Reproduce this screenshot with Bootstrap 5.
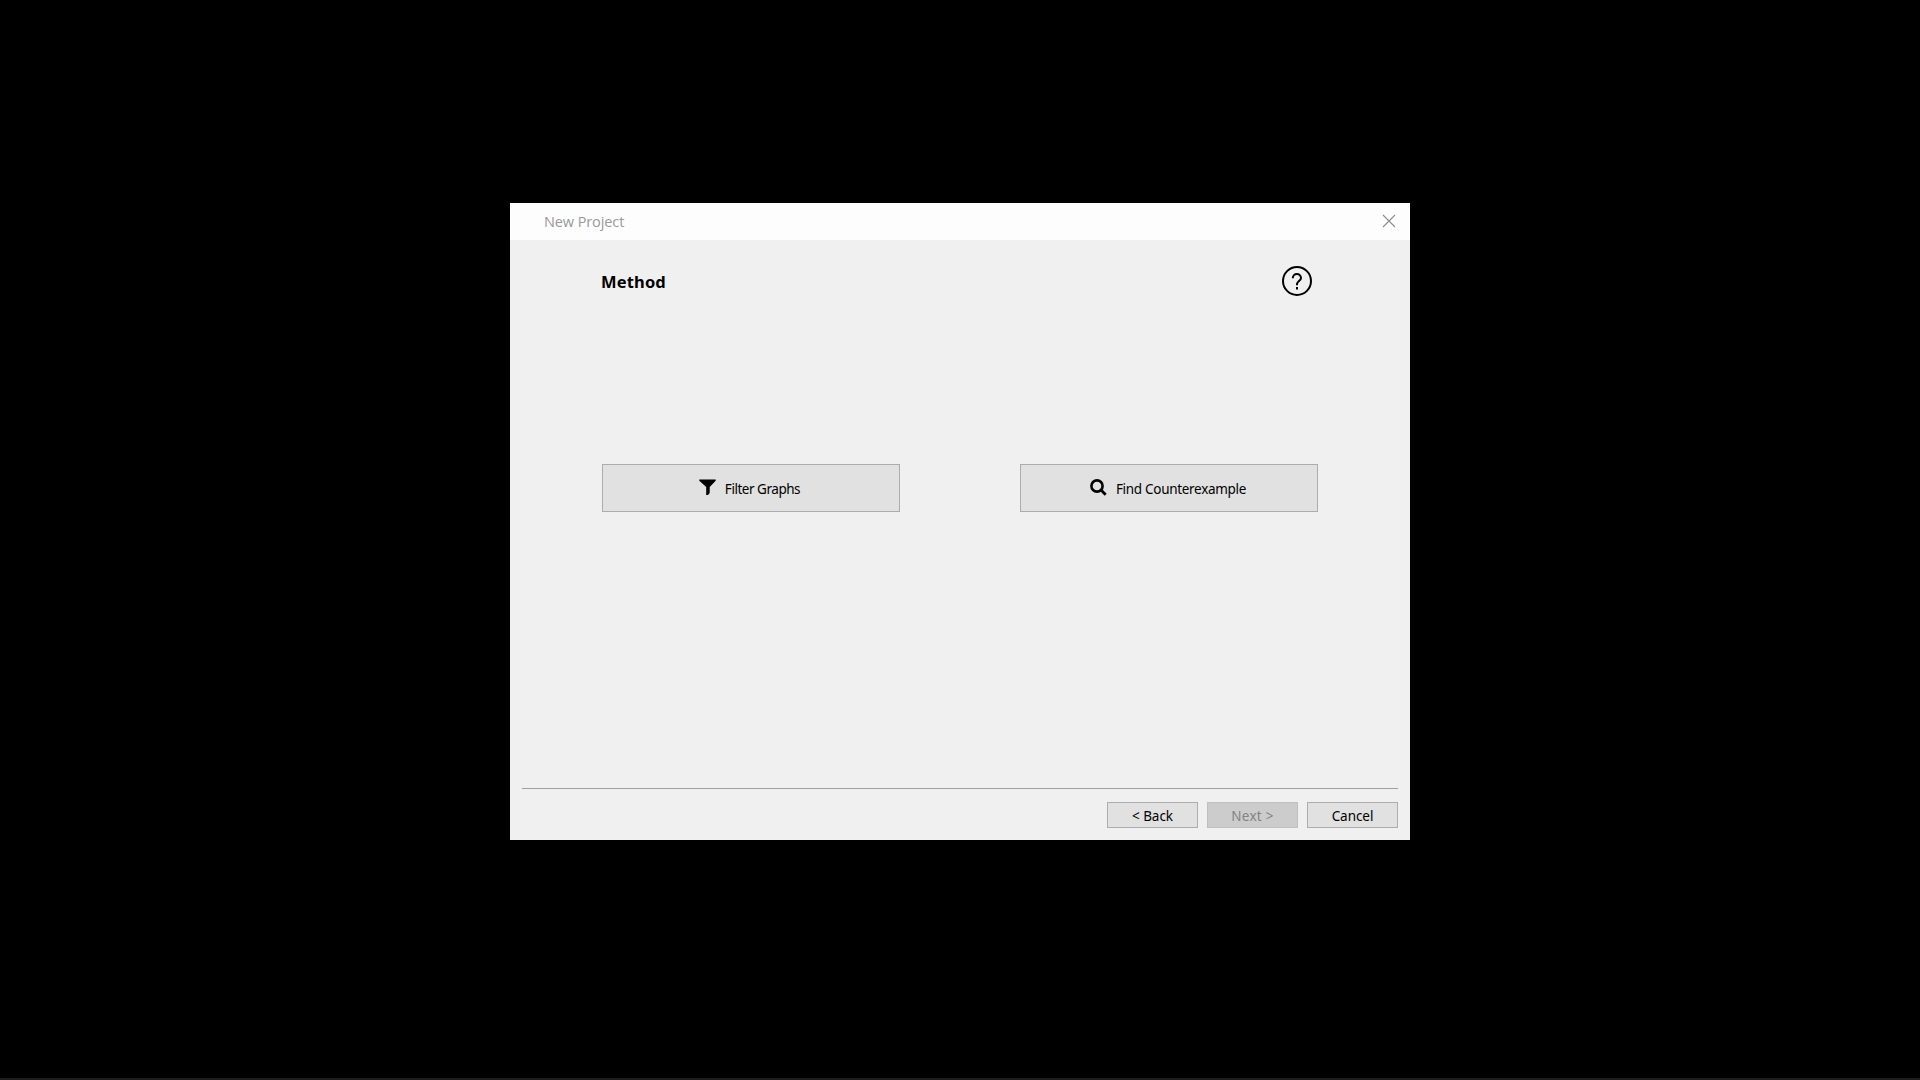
<!DOCTYPE html>
<html lang="en">
<head>
<meta charset="utf-8">
<title>New Project</title>
<link rel="stylesheet" href="https://cdn.jsdelivr.net/npm/bootstrap@5.3.0/dist/css/bootstrap.min.css">
<style>
html, body { height: 100%; }
body { background: #000; font-family: "Noto Sans", "Open Sans", sans-serif; font-size: 14px; color: #000; border-bottom: 2px solid #1c1c1c; }
.wizard { width: 900px; height: 637px; margin-top: 203px; background: #f0f0f0; }
.wizard-title { height: 37px; background: #fdfdfd; color: #999; padding: 0 14px 0 34px; font-family: "Open Sans", sans-serif; font-size: 14.5px; letter-spacing: -.1px; }
.wizard-title svg { margin-bottom: 1px; }
.wizard-body { padding: 26px 92px 0; }
.page-title { font-size: 16.5px; font-weight: 700; letter-spacing: .15px; line-height: 32px; height: 30px; margin: 0 0 0 -1px; }
.help { width: 30px; height: 30px; margin-right: 6px; }
.methods { margin-top: 168px; gap: 120px; }
.wz { --bs-btn-color: #000; --bs-btn-bg: #e1e1e1; --bs-btn-border-color: #adadad; --bs-btn-hover-bg: #e5f1fb; --bs-btn-disabled-color: #838383; --bs-btn-disabled-bg: #cccccc; --bs-btn-disabled-border-color: #bfbfbf; --bs-btn-disabled-opacity: 1; --bs-btn-font-size: 13.5px; letter-spacing: -.3px; line-height: 18px; }
.wz-method { height: 48px; gap: 9px; }
.wz-method svg { margin-bottom: 1px; }
.wz-method span { padding-top: 2px; }
.label-filter { letter-spacing: -.47px; padding-right: 3px; }
.label-find { padding-right: 2px; }
.wz-foot { width: 91px; height: 26px; letter-spacing: -.05px; }
.wz-foot span { display: block; padding-top: 2px; }
.wz-foot:disabled { letter-spacing: .25px; }
.wizard-foot { margin: 0 12px 12px; padding-top: 13px; gap: 9px; border-top: 1px solid #a0a0a0; }
</style>
<script src="https://cdn.jsdelivr.net/npm/bootstrap@5.3.0/dist/js/bootstrap.bundle.min.js"></script>
</head>
<body class="d-flex justify-content-center align-items-start overflow-hidden">
<main class="wizard d-flex flex-column">
  <header class="wizard-title d-flex align-items-center justify-content-between">
    <span>New Project</span>
    <svg width="14" height="14" viewBox="0 0 14 14" stroke="#8c8c8c" stroke-width="1.1"><path d="M1 1l12 12M13 1L1 13"/></svg>
  </header>
  <section class="wizard-body flex-grow-1">
    <div class="d-flex justify-content-between">
      <h1 class="page-title">Method</h1>
      <svg class="help" viewBox="0 0 30 30" fill="none" stroke="#000" stroke-width="2"><circle cx="15" cy="15" r="14"/><path d="M10.8 12.3V12a4.1 4.1 0 0 1 8.2 0c0 2.8-4 3.2-4 6v1.2"/><path d="M15 21v2.4"/></svg>
    </div>
    <div class="methods d-flex">
      <button class="btn wz wz-method flex-fill rounded-0 d-flex align-items-center justify-content-center w-50">
        <svg width="17" height="17" viewBox="0 0 17 17"><path d="M.3.5h16.4v1.2L10.7 8v6L9 16H7.2V8L.3 1.7z"/></svg>
        <span class="label-filter">Filter Graphs</span>
      </button>
      <button class="btn wz wz-method flex-fill rounded-0 d-flex align-items-center justify-content-center w-50">
        <svg width="17" height="17" viewBox="0 0 17 17" fill="none" stroke="#000" stroke-width="2.6"><circle cx="7" cy="7" r="5.6"/><path d="M11 11l4.7 4.7" stroke-width="2.8"/></svg>
        <span class="label-find">Find Counterexample</span>
      </button>
    </div>
  </section>
  <footer class="wizard-foot d-flex justify-content-end">
    <button class="btn wz wz-foot rounded-0 p-0"><span>&lt; Back</span></button>
    <button class="btn wz wz-foot rounded-0 p-0" disabled><span>Next &gt;</span></button>
    <button class="btn wz wz-foot rounded-0 p-0"><span>Cancel</span></button>
  </footer>
</main>
</body>
</html>
